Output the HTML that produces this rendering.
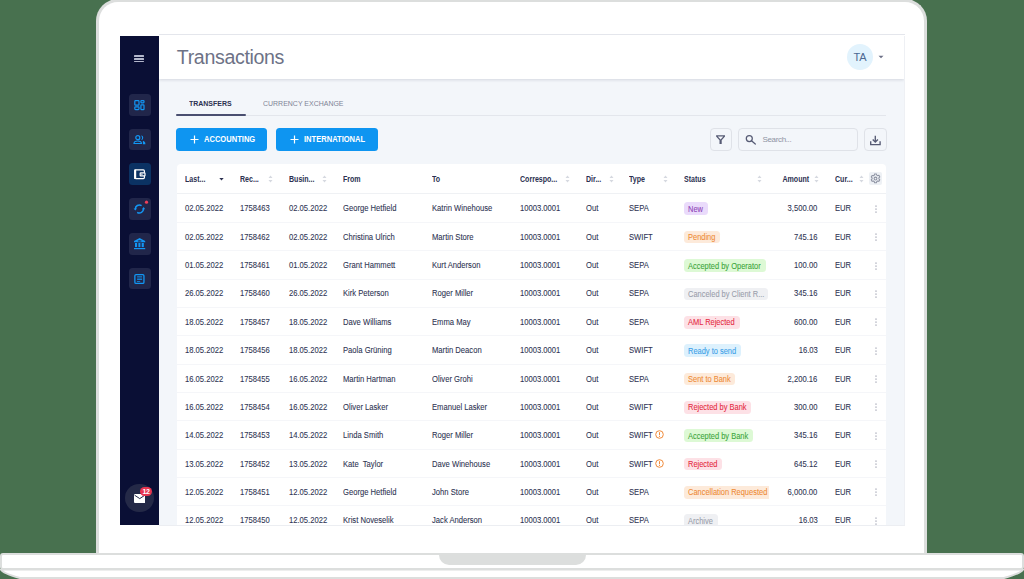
<!DOCTYPE html>
<html><head><meta charset="utf-8"><style>
*{margin:0;padding:0;box-sizing:border-box}
html,body{width:1024px;height:579px;overflow:hidden;background:#48714f;font-family:"Liberation Sans",sans-serif}
.bezel{position:absolute;left:96px;top:-1px;width:831px;height:556px;background:#fff;border:3px solid #dcdedd;border-bottom:none;border-radius:22px 22px 0 0}
.base{position:absolute;left:0;top:553px;width:1024px;height:17px;background:#fff;border:2.5px solid #dcdedd;border-radius:3px}
.notch{position:absolute;left:439px;top:553px;width:147px;height:12px;background:#dcdedd;border-radius:0 0 10px 10px}
.screen{position:absolute;left:119.5px;top:35.6px;width:785.5px;height:489.2px;background:#f3f6fa;overflow:hidden;border-right:1px solid #eef0f4}
.stop{position:absolute;left:159px;top:34px;width:746px;height:1.3px;background:#e4e6ec}
.side{position:absolute;left:0;top:0;width:39.5px;height:100%;background:#0a0f35}
.ham{position:absolute;left:14.3px;top:19.8px;width:10.4px;height:8px}
.ham i{display:block;height:1.45px;background:#b4b8cc;margin-bottom:1.3px;border-radius:0.5px}
.sb{position:absolute;left:9.3px;width:21.8px;height:21.8px;border-radius:3.5px;background:#21264a}
.sb svg{position:absolute;left:0;top:0}
.sb.act{background:#0b3263}
.rdot{position:absolute;right:2.5px;top:2px;width:4px;height:4px;border-radius:50%;background:#f0435a}
.mail{position:absolute;left:5.5px;top:448.4px;width:28.5px;height:28.5px;border-radius:50%;background:#242947}
.badge12{position:absolute;left:15.2px;top:3px;width:11.6px;height:9px;border-radius:5px;background:#e8354f;color:#fff;font-size:7px;font-weight:bold;line-height:9px;text-align:center;letter-spacing:-0.3px}
.header{position:absolute;left:39.5px;top:0;right:0;height:43px;background:#fff;box-shadow:0 1px 3px rgba(20,30,60,0.14)}
.title{position:absolute;left:17.8px;top:10.5px;font-size:19.6px;color:#6d7286;letter-spacing:-0.35px}
.avatar{position:absolute;left:688.1px;top:8.3px;width:26px;height:26px;border-radius:50%;background:#e2f3fd;color:#4d6892;font-size:11px;text-align:center;line-height:26px}
.caret{position:absolute;left:719px;top:19px}
.tab{position:absolute;top:63.8px;font-size:8px;font-weight:bold;transform:scaleX(0.872);transform-origin:0 0;white-space:nowrap}
.tabline{position:absolute;left:56.5px;top:79.4px;width:710px;height:1px;background:#e3e6ec}
.tabact{position:absolute;left:56.5px;top:78.6px;width:69.5px;height:1.6px;background:#4a4f70;border-radius:1px}
.btn{position:absolute;top:92.6px;height:22.8px;border-radius:3.5px;background:#0e95f1;color:#fff;font-size:8.2px;font-weight:bold}
.btn span{position:absolute;top:7px;transform:scaleX(0.923);transform-origin:0 0;white-space:nowrap}
.btn svg{position:absolute;top:7px}
.tool{position:absolute;top:93.2px;height:21.9px;border:1px solid #dfe2e8;border-radius:4px;background:#f3f6fa}
.search-t{position:absolute;left:23.5px;top:5.6px;font-size:8px;letter-spacing:-0.35px;color:#8e93a3}
.card{position:absolute;left:57.3px;top:128.4px;width:708.8px;height:400px;background:#fff;border-radius:4px 4px 0 0}
.hdr{position:absolute;left:0;top:0;width:100%;height:29.5px;border-bottom:1px solid #eff1f4}
.ht{position:absolute;top:9.2px;font-size:8.5px;font-weight:bold;letter-spacing:0;transform:scaleX(0.83);transform-origin:0 0;color:#2b3050;white-space:nowrap}
.hs{position:absolute;top:10.2px;line-height:0}
.gear{position:absolute;top:6.9px;width:12.8px;height:13px;background:#eef1f5;border-radius:2px;display:flex;align-items:center;justify-content:center}
.tr{position:absolute;left:0;width:100%;height:28.36px;border-bottom:1px solid #f5f6f9}
.td{position:absolute;top:8.9px;font-size:8.3px;letter-spacing:0;color:#2e3352;white-space:nowrap;transform:scaleX(0.92);transform-origin:0 0;-webkit-text-stroke:0.08px #2e3352}
.td.r{transform-origin:100% 0}
.wic{position:absolute;top:8.9px;line-height:0}
.dots{position:absolute;top:10.3px;line-height:0}
.bd{position:absolute;top:8px;height:12.6px;border-radius:3.5px;overflow:hidden;white-space:nowrap}
.bd span{position:absolute;left:4.4px;top:2.4px;font-size:8.3px;line-height:1;transform:scaleX(0.9);transform-origin:0 0;-webkit-text-stroke:0.08px currentColor}
.new{background:#eadbfb;color:#8e45b8}
.pend{background:#fdeada;color:#ee8a36}
.acc{background:#ddf9d5;color:#3ba53b}
.gray{background:#eff0f3;color:#9a9eab}
.rej{background:#fde1e6;color:#e52a42}
.blue{background:#ddf1fd;color:#3c9fe8}
.cut{border-radius:3.5px 0 0 3.5px}
</style></head><body>
<div class="bezel"></div>
<div class="base"></div>
<div class="notch"></div>
<svg class="lower" width="1024" height="10" viewBox="0 0 1024 10" style="position:absolute;left:0;top:569px"><path d="M1 0.5 Q2 4 20 9 H1004 Q1022 4 1023 0.5Z" fill="#fff" stroke="#dcdedd" stroke-width="2"/></svg>
<div class="stop"></div>
<div style="position:absolute;left:159px;top:524.6px;width:746px;height:1px;background:#eceef2"></div>
<div class="screen">
  <div class="side">
    <div class="ham"><i></i><i></i><i></i></div>
    <div class="sb" style="top:58.20px"><svg width="22" height="22" viewBox="0 0 22 22"><g fill="none" stroke="#1296f4" stroke-width="1.2"><rect x="5.8" y="6.6" width="4.2" height="4.6" rx="0.8"/><rect x="5.8" y="12.8" width="4.2" height="2.8" rx="0.8"/><rect x="11.9" y="6.6" width="3.1" height="2.2" rx="0.7"/><rect x="11.9" y="10.9" width="3.1" height="4.7" rx="0.7"/></g></svg></div><div class="sb" style="top:92.98px"><svg width="22" height="22" viewBox="0 0 22 22"><g fill="none" stroke="#1296f4" stroke-width="1.2"><circle cx="8.8" cy="8.7" r="2"/><path d="M5 14.5C5 12.6 6.9 12 8.7 12S12.4 12.6 12.4 14.5Z"/></g><path d="M12 6.6a2.25 2.25 0 0 1 0 4.5a3.2 3.2 0 0 0 0-4.5z" fill="#1296f4"/><path d="M13.9 11.8C15.6 12.2 16.4 13.3 16.4 15.2H13.9Z" fill="#1296f4"/></svg></div><div class="sb act" style="top:127.76px"><svg width="22" height="22" viewBox="0 0 22 22"><rect x="5.8" y="6.9" width="9.6" height="8.7" rx="1" fill="none" stroke="#fff" stroke-width="1.2"/><rect x="5.2" y="6.5" width="2" height="9.5" fill="#fff"/><rect x="11.2" y="9.8" width="4.8" height="3.1" rx="0.5" fill="#0b3263" stroke="#fff" stroke-width="1.2"/><circle cx="12.9" cy="11.3" r="0.7" fill="#fff"/></svg></div><div class="sb" style="top:162.54px"><svg width="22" height="22" viewBox="0 0 22 22"><g fill="none" stroke="#1296f4" stroke-width="1.5"><path d="M6.4 11.2A4 3.9 0 0 1 12.6 7.6"/><path d="M14.4 10.6A4 3.9 0 0 1 8.2 14.3"/></g><path d="M4.6 10.4H8L6.3 12.6Z" fill="#1296f4"/><path d="M13 11.2H16.2L14.6 9Z" fill="#1296f4"/><circle cx="17.5" cy="4.2" r="1.6" fill="#f0415a"/></svg></div><div class="sb" style="top:197.32px"><svg width="22" height="22" viewBox="0 0 22 22"><path d="M10.6 5L16.2 8V9.2H5V8Z" fill="#1296f4"/><ellipse cx="10.6" cy="7.9" rx="2" ry="0.65" fill="#21264a"/><g fill="#1296f4"><rect x="6" y="10" width="2.1" height="4.1"/><rect x="9.4" y="10" width="2" height="4.1"/><rect x="12.7" y="10" width="2.1" height="4.1"/><rect x="5" y="15" width="11.2" height="1.2"/></g></svg></div><div class="sb" style="top:232.10px"><svg width="22" height="22" viewBox="0 0 22 22"><rect x="5.85" y="6.65" width="9.1" height="8.8" rx="1.2" fill="none" stroke="#1296f4" stroke-width="1.3"/><g fill="#1296f4"><rect x="8.1" y="8.4" width="5" height="0.8"/><rect x="8.1" y="9.7" width="5" height="0.8" opacity="0.8"/><rect x="8.1" y="11" width="5" height="0.8"/><rect x="7.9" y="13.2" width="3.3" height="0.75"/></g></svg></div>
    <div class="mail"><svg style="position:absolute;left:8.7px;top:10.2px" width="11.5" height="9" viewBox="0 0 11.5 9"><rect x="0" y="0" width="11.5" height="9" rx="1" fill="#fff"/><path d="M0.6 1.2L5.75 4.6L10.9 1.2" fill="none" stroke="#242947" stroke-width="1"/></svg><div class="badge12">12</div></div>
  </div>
  <div class="header">
    <div class="title">Transactions</div>
    <div class="avatar">TA</div>
    <svg class="caret" width="6" height="4" viewBox="0 0 6 4"><path d="M0.5 0.8H5.5L3 3.3Z" fill="#6b6f86"/></svg>
  </div>
  <div class="tab" style="left:69.8px;color:#2c3150">TRANSFERS</div>
  <div class="tab" style="left:143.5px;color:#7f8496;font-weight:normal">CURRENCY EXCHANGE</div>
  <div class="tabline"></div>
  <div class="tabact"></div>
  <div class="btn" style="left:56.5px;width:91px"><svg style="left:13.5px" width="9" height="9" viewBox="0 0 9 9"><path d="M4.5 0.5V8.5M0.5 4.5H8.5" stroke="#fff" stroke-width="1.2"/></svg><span style="left:27.5px">ACCOUNTING</span></div>
  <div class="btn" style="left:156.5px;width:101.5px"><svg style="left:13.5px" width="9" height="9" viewBox="0 0 9 9"><path d="M4.5 0.5V8.5M0.5 4.5H8.5" stroke="#fff" stroke-width="1.2"/></svg><span style="left:27.5px">INTERNATIONAL</span></div>
  <div class="tool" style="left:590.5px;top:92.9px;width:22px;height:22.3px"><svg style="position:absolute;left:0;top:0.8px" width="20" height="20" viewBox="0 0 20 20"><path d="M5.1 5.2H14V6.5L10.7 10.2V13.9H8.5V10.2L5.1 6.5Z" fill="#565b74"/><path d="M6.8 6.6H12.3L9.6 9.5Z" fill="#f3f6fa"/></svg></div>
  <div class="tool" style="left:618.5px;top:92.9px;width:120px;height:22.3px"><svg style="position:absolute;left:0;top:0.8px" width="20" height="20" viewBox="0 0 20 20"><circle cx="10.3" cy="8.5" r="3" fill="none" stroke="#565b74" stroke-width="1.25"/><path d="M12.5 10.7L16.3 14" stroke="#565b74" stroke-width="1.25" stroke-linecap="round"/></svg><span class="search-t">Search...</span></div>
  <div class="tool" style="left:744.6px;top:92.8px;width:22.6px;height:22.5px"><svg style="position:absolute;left:0;top:0.8px" width="20" height="20" viewBox="0 0 20 20"><g fill="none" stroke="#565b74" stroke-width="1.35"><path d="M10.3 5.7V12"/><path d="M7.7 9.5L10.3 12.1L12.9 9.5"/><path d="M5.7 11.2V14.6H15.1V11.2"/></g></svg></div>
  <div class="card"><div style="position:absolute;left:0;right:0;top:1px;bottom:0">
    <div class="hdr"><div class="ht" style="left:8.4px">Last...</div><div class="hs" style="left:42.7px"><svg width="5" height="8" viewBox="0 0 5 8"><path d="M0.3 3L4.7 3L2.5 5.4Z" fill="#2b3050"/></svg></div><div class="ht" style="left:63.0px">Rec...</div><div class="hs" style="left:91.2px"><svg class="si" width="5" height="8" viewBox="0 0 5 8"><path d="M2.5 0.5L4.5 3H0.5Z M2.5 7.5L4.5 5H0.5Z" fill="#d6d9e0"/></svg></div><div class="ht" style="left:112.0px">Busin...</div><div class="hs" style="left:145.7px"><svg class="si" width="5" height="8" viewBox="0 0 5 8"><path d="M2.5 0.5L4.5 3H0.5Z M2.5 7.5L4.5 5H0.5Z" fill="#d6d9e0"/></svg></div><div class="ht" style="left:166.2px">From</div><div class="ht" style="left:255.1px">To</div><div class="ht" style="left:343.7px">Correspo...</div><div class="hs" style="left:388.7px"><svg class="si" width="5" height="8" viewBox="0 0 5 8"><path d="M2.5 0.5L4.5 3H0.5Z M2.5 7.5L4.5 5H0.5Z" fill="#d6d9e0"/></svg></div><div class="ht" style="left:408.9px">Dir...</div><div class="hs" style="left:432.2px"><svg class="si" width="5" height="8" viewBox="0 0 5 8"><path d="M2.5 0.5L4.5 3H0.5Z M2.5 7.5L4.5 5H0.5Z" fill="#d6d9e0"/></svg></div><div class="ht" style="left:452.6px">Type</div><div class="hs" style="left:486.2px"><svg class="si" width="5" height="8" viewBox="0 0 5 8"><path d="M2.5 0.5L4.5 3H0.5Z M2.5 7.5L4.5 5H0.5Z" fill="#d6d9e0"/></svg></div><div class="ht" style="left:507.1px">Status</div><div class="hs" style="left:580.7px"><svg class="si" width="5" height="8" viewBox="0 0 5 8"><path d="M2.5 0.5L4.5 3H0.5Z M2.5 7.5L4.5 5H0.5Z" fill="#d6d9e0"/></svg></div><div class="ht" style="left:658.2px">Cur...</div><div class="hs" style="left:682.2px"><svg class="si" width="5" height="8" viewBox="0 0 5 8"><path d="M2.5 0.5L4.5 3H0.5Z M2.5 7.5L4.5 5H0.5Z" fill="#d6d9e0"/></svg></div><div class="ht" style="right:76.8px;transform-origin:100% 0">Amount</div><div class="hs" style="left:637.7px"><svg class="si" width="5" height="8" viewBox="0 0 5 8"><path d="M2.5 0.5L4.5 3H0.5Z M2.5 7.5L4.5 5H0.5Z" fill="#d6d9e0"/></svg></div><div class="gear" style="left:692.2px"><svg width="11" height="11" viewBox="0 0 11 11"><g fill="none" stroke="#8d92a2" stroke-width="1.05" stroke-linejoin="round"><circle cx="5.5" cy="5.5" r="1.4"/><path d="M4.6 0.9h1.8l.35 1.25.9.52 1.26-.33.9 1.56-.92.93v1.04l.92.93-.9 1.56-1.26-.33-.9.52-.35 1.25H4.6l-.35-1.25-.9-.52-1.26.33-.9-1.56.92-.93V4.9l-.92-.93.9-1.56 1.26.33.9-.52z"/></g></svg></div></div>
    <div class="tr" style="top:29.50px"><div class="td" style="left:8.4px">02.05.2022</div><div class="td" style="left:63.0px">1758463</div><div class="td" style="left:112.0px">02.05.2022</div><div class="td" style="left:166.2px">George Hetfield</div><div class="td" style="left:255.1px">Katrin Winehouse</div><div class="td" style="left:343.7px">10003.0001</div><div class="td" style="left:408.9px">Out</div><div class="td" style="left:452.6px">SEPA</div><div class="bd new" style="left:507.1px;width:23.8px"><span>New</span></div><div class="td r" style="right:68.0px">3,500.00</div><div class="td" style="left:658.2px">EUR</div><div class="dots" style="left:698.4px"><svg width="2" height="8" viewBox="0 0 2 8"><circle cx="1" cy="1" r="0.6" fill="#5b607a"/><circle cx="1" cy="4" r="0.6" fill="#5b607a"/><circle cx="1" cy="7" r="0.6" fill="#5b607a"/></svg></div></div><div class="tr" style="top:57.86px"><div class="td" style="left:8.4px">02.05.2022</div><div class="td" style="left:63.0px">1758462</div><div class="td" style="left:112.0px">02.05.2022</div><div class="td" style="left:166.2px">Christina Ulrich</div><div class="td" style="left:255.1px">Martin Store</div><div class="td" style="left:343.7px">10003.0001</div><div class="td" style="left:408.9px">Out</div><div class="td" style="left:452.6px">SWIFT</div><div class="bd pend" style="left:507.1px;width:36.1px"><span>Pending</span></div><div class="td r" style="right:68.0px">745.16</div><div class="td" style="left:658.2px">EUR</div><div class="dots" style="left:698.4px"><svg width="2" height="8" viewBox="0 0 2 8"><circle cx="1" cy="1" r="0.6" fill="#5b607a"/><circle cx="1" cy="4" r="0.6" fill="#5b607a"/><circle cx="1" cy="7" r="0.6" fill="#5b607a"/></svg></div></div><div class="tr" style="top:86.22px"><div class="td" style="left:8.4px">01.05.2022</div><div class="td" style="left:63.0px">1758461</div><div class="td" style="left:112.0px">01.05.2022</div><div class="td" style="left:166.2px">Grant Hammett</div><div class="td" style="left:255.1px">Kurt Anderson</div><div class="td" style="left:343.7px">10003.0001</div><div class="td" style="left:408.9px">Out</div><div class="td" style="left:452.6px">SEPA</div><div class="bd acc" style="left:507.1px;width:82px"><span>Accepted by Operator</span></div><div class="td r" style="right:68.0px">100.00</div><div class="td" style="left:658.2px">EUR</div><div class="dots" style="left:698.4px"><svg width="2" height="8" viewBox="0 0 2 8"><circle cx="1" cy="1" r="0.6" fill="#5b607a"/><circle cx="1" cy="4" r="0.6" fill="#5b607a"/><circle cx="1" cy="7" r="0.6" fill="#5b607a"/></svg></div></div><div class="tr" style="top:114.58px"><div class="td" style="left:8.4px">26.05.2022</div><div class="td" style="left:63.0px">1758460</div><div class="td" style="left:112.0px">26.05.2022</div><div class="td" style="left:166.2px">Kirk Peterson</div><div class="td" style="left:255.1px">Roger Miller</div><div class="td" style="left:343.7px">10003.0001</div><div class="td" style="left:408.9px">Out</div><div class="td" style="left:452.6px">SEPA</div><div class="bd gray" style="left:507.1px;width:84.1px"><span>Canceled by Client R...</span></div><div class="td r" style="right:68.0px">345.16</div><div class="td" style="left:658.2px">EUR</div><div class="dots" style="left:698.4px"><svg width="2" height="8" viewBox="0 0 2 8"><circle cx="1" cy="1" r="0.6" fill="#5b607a"/><circle cx="1" cy="4" r="0.6" fill="#5b607a"/><circle cx="1" cy="7" r="0.6" fill="#5b607a"/></svg></div></div><div class="tr" style="top:142.94px"><div class="td" style="left:8.4px">18.05.2022</div><div class="td" style="left:63.0px">1758457</div><div class="td" style="left:112.0px">18.05.2022</div><div class="td" style="left:166.2px">Dave Williams</div><div class="td" style="left:255.1px">Emma May</div><div class="td" style="left:343.7px">10003.0001</div><div class="td" style="left:408.9px">Out</div><div class="td" style="left:452.6px">SEPA</div><div class="bd rej" style="left:507.1px;width:55.7px"><span>AML Rejected</span></div><div class="td r" style="right:68.0px">600.00</div><div class="td" style="left:658.2px">EUR</div><div class="dots" style="left:698.4px"><svg width="2" height="8" viewBox="0 0 2 8"><circle cx="1" cy="1" r="0.6" fill="#5b607a"/><circle cx="1" cy="4" r="0.6" fill="#5b607a"/><circle cx="1" cy="7" r="0.6" fill="#5b607a"/></svg></div></div><div class="tr" style="top:171.30px"><div class="td" style="left:8.4px">18.05.2022</div><div class="td" style="left:63.0px">1758456</div><div class="td" style="left:112.0px">18.05.2022</div><div class="td" style="left:166.2px">Paola Grüning</div><div class="td" style="left:255.1px">Martin Deacon</div><div class="td" style="left:343.7px">10003.0001</div><div class="td" style="left:408.9px">Out</div><div class="td" style="left:452.6px">SWIFT</div><div class="bd blue" style="left:507.1px;width:56.7px"><span>Ready to send</span></div><div class="td r" style="right:68.0px">16.03</div><div class="td" style="left:658.2px">EUR</div><div class="dots" style="left:698.4px"><svg width="2" height="8" viewBox="0 0 2 8"><circle cx="1" cy="1" r="0.6" fill="#5b607a"/><circle cx="1" cy="4" r="0.6" fill="#5b607a"/><circle cx="1" cy="7" r="0.6" fill="#5b607a"/></svg></div></div><div class="tr" style="top:199.66px"><div class="td" style="left:8.4px">16.05.2022</div><div class="td" style="left:63.0px">1758455</div><div class="td" style="left:112.0px">16.05.2022</div><div class="td" style="left:166.2px">Martin Hartman</div><div class="td" style="left:255.1px">Oliver Grohi</div><div class="td" style="left:343.7px">10003.0001</div><div class="td" style="left:408.9px">Out</div><div class="td" style="left:452.6px">SEPA</div><div class="bd pend" style="left:507.1px;width:51.6px"><span>Sent to Bank</span></div><div class="td r" style="right:68.0px">2,200.16</div><div class="td" style="left:658.2px">EUR</div><div class="dots" style="left:698.4px"><svg width="2" height="8" viewBox="0 0 2 8"><circle cx="1" cy="1" r="0.6" fill="#5b607a"/><circle cx="1" cy="4" r="0.6" fill="#5b607a"/><circle cx="1" cy="7" r="0.6" fill="#5b607a"/></svg></div></div><div class="tr" style="top:228.02px"><div class="td" style="left:8.4px">16.05.2022</div><div class="td" style="left:63.0px">1758454</div><div class="td" style="left:112.0px">16.05.2022</div><div class="td" style="left:166.2px">Oliver Lasker</div><div class="td" style="left:255.1px">Emanuel Lasker</div><div class="td" style="left:343.7px">10003.0001</div><div class="td" style="left:408.9px">Out</div><div class="td" style="left:452.6px">SWIFT</div><div class="bd rej" style="left:507.1px;width:66.8px"><span>Rejected by Bank</span></div><div class="td r" style="right:68.0px">300.00</div><div class="td" style="left:658.2px">EUR</div><div class="dots" style="left:698.4px"><svg width="2" height="8" viewBox="0 0 2 8"><circle cx="1" cy="1" r="0.6" fill="#5b607a"/><circle cx="1" cy="4" r="0.6" fill="#5b607a"/><circle cx="1" cy="7" r="0.6" fill="#5b607a"/></svg></div></div><div class="tr" style="top:256.38px"><div class="td" style="left:8.4px">14.05.2022</div><div class="td" style="left:63.0px">1758453</div><div class="td" style="left:112.0px">14.05.2022</div><div class="td" style="left:166.2px">Linda Smith</div><div class="td" style="left:255.1px">Roger Miller</div><div class="td" style="left:343.7px">10003.0001</div><div class="td" style="left:408.9px">Out</div><div class="td" style="left:452.6px">SWIFT</div><div class="wic" style="left:478.2px"><svg class="wi" width="9" height="9" viewBox="0 0 9 9"><circle cx="4.5" cy="4.5" r="3.8" fill="none" stroke="#ef8b3c" stroke-width="1"/><rect x="4" y="2.2" width="1" height="3" fill="#ef8b3c"/><rect x="4" y="5.9" width="1" height="1" fill="#ef8b3c"/></svg></div><div class="bd acc" style="left:507.1px;width:69.4px"><span>Accepted by Bank</span></div><div class="td r" style="right:68.0px">345.16</div><div class="td" style="left:658.2px">EUR</div><div class="dots" style="left:698.4px"><svg width="2" height="8" viewBox="0 0 2 8"><circle cx="1" cy="1" r="0.6" fill="#5b607a"/><circle cx="1" cy="4" r="0.6" fill="#5b607a"/><circle cx="1" cy="7" r="0.6" fill="#5b607a"/></svg></div></div><div class="tr" style="top:284.74px"><div class="td" style="left:8.4px">13.05.2022</div><div class="td" style="left:63.0px">1758452</div><div class="td" style="left:112.0px">13.05.2022</div><div class="td" style="left:166.2px">Kate&nbsp; Taylor</div><div class="td" style="left:255.1px">Dave Winehouse</div><div class="td" style="left:343.7px">10003.0001</div><div class="td" style="left:408.9px">Out</div><div class="td" style="left:452.6px">SWIFT</div><div class="wic" style="left:478.2px"><svg class="wi" width="9" height="9" viewBox="0 0 9 9"><circle cx="4.5" cy="4.5" r="3.8" fill="none" stroke="#ef8b3c" stroke-width="1"/><rect x="4" y="2.2" width="1" height="3" fill="#ef8b3c"/><rect x="4" y="5.9" width="1" height="1" fill="#ef8b3c"/></svg></div><div class="bd rej" style="left:507.1px;width:38.3px"><span>Rejected</span></div><div class="td r" style="right:68.0px">645.12</div><div class="td" style="left:658.2px">EUR</div><div class="dots" style="left:698.4px"><svg width="2" height="8" viewBox="0 0 2 8"><circle cx="1" cy="1" r="0.6" fill="#5b607a"/><circle cx="1" cy="4" r="0.6" fill="#5b607a"/><circle cx="1" cy="7" r="0.6" fill="#5b607a"/></svg></div></div><div class="tr" style="top:313.10px"><div class="td" style="left:8.4px">12.05.2022</div><div class="td" style="left:63.0px">1758451</div><div class="td" style="left:112.0px">12.05.2022</div><div class="td" style="left:166.2px">George Hetfield</div><div class="td" style="left:255.1px">John Store</div><div class="td" style="left:343.7px">10003.0001</div><div class="td" style="left:408.9px">Out</div><div class="td" style="left:452.6px">SEPA</div><div class="bd pend cut" style="left:507.1px;width:84.9px"><span>Cancellation Requested</span></div><div class="td r" style="right:68.0px">6,000.00</div><div class="td" style="left:658.2px">EUR</div><div class="dots" style="left:698.4px"><svg width="2" height="8" viewBox="0 0 2 8"><circle cx="1" cy="1" r="0.6" fill="#5b607a"/><circle cx="1" cy="4" r="0.6" fill="#5b607a"/><circle cx="1" cy="7" r="0.6" fill="#5b607a"/></svg></div></div><div class="tr" style="top:341.46px"><div class="td" style="left:8.4px">12.05.2022</div><div class="td" style="left:63.0px">1758450</div><div class="td" style="left:112.0px">12.05.2022</div><div class="td" style="left:166.2px">Krist Noveselik</div><div class="td" style="left:255.1px">Jack Anderson</div><div class="td" style="left:343.7px">10003.0001</div><div class="td" style="left:408.9px">Out</div><div class="td" style="left:452.6px">SEPA</div><div class="bd gray" style="left:507.1px;width:33.9px"><span>Archive</span></div><div class="td r" style="right:68.0px">16.03</div><div class="td" style="left:658.2px">EUR</div><div class="dots" style="left:698.4px"><svg width="2" height="8" viewBox="0 0 2 8"><circle cx="1" cy="1" r="0.6" fill="#5b607a"/><circle cx="1" cy="4" r="0.6" fill="#5b607a"/><circle cx="1" cy="7" r="0.6" fill="#5b607a"/></svg></div></div>
  </div></div>
</div>
</body></html>
